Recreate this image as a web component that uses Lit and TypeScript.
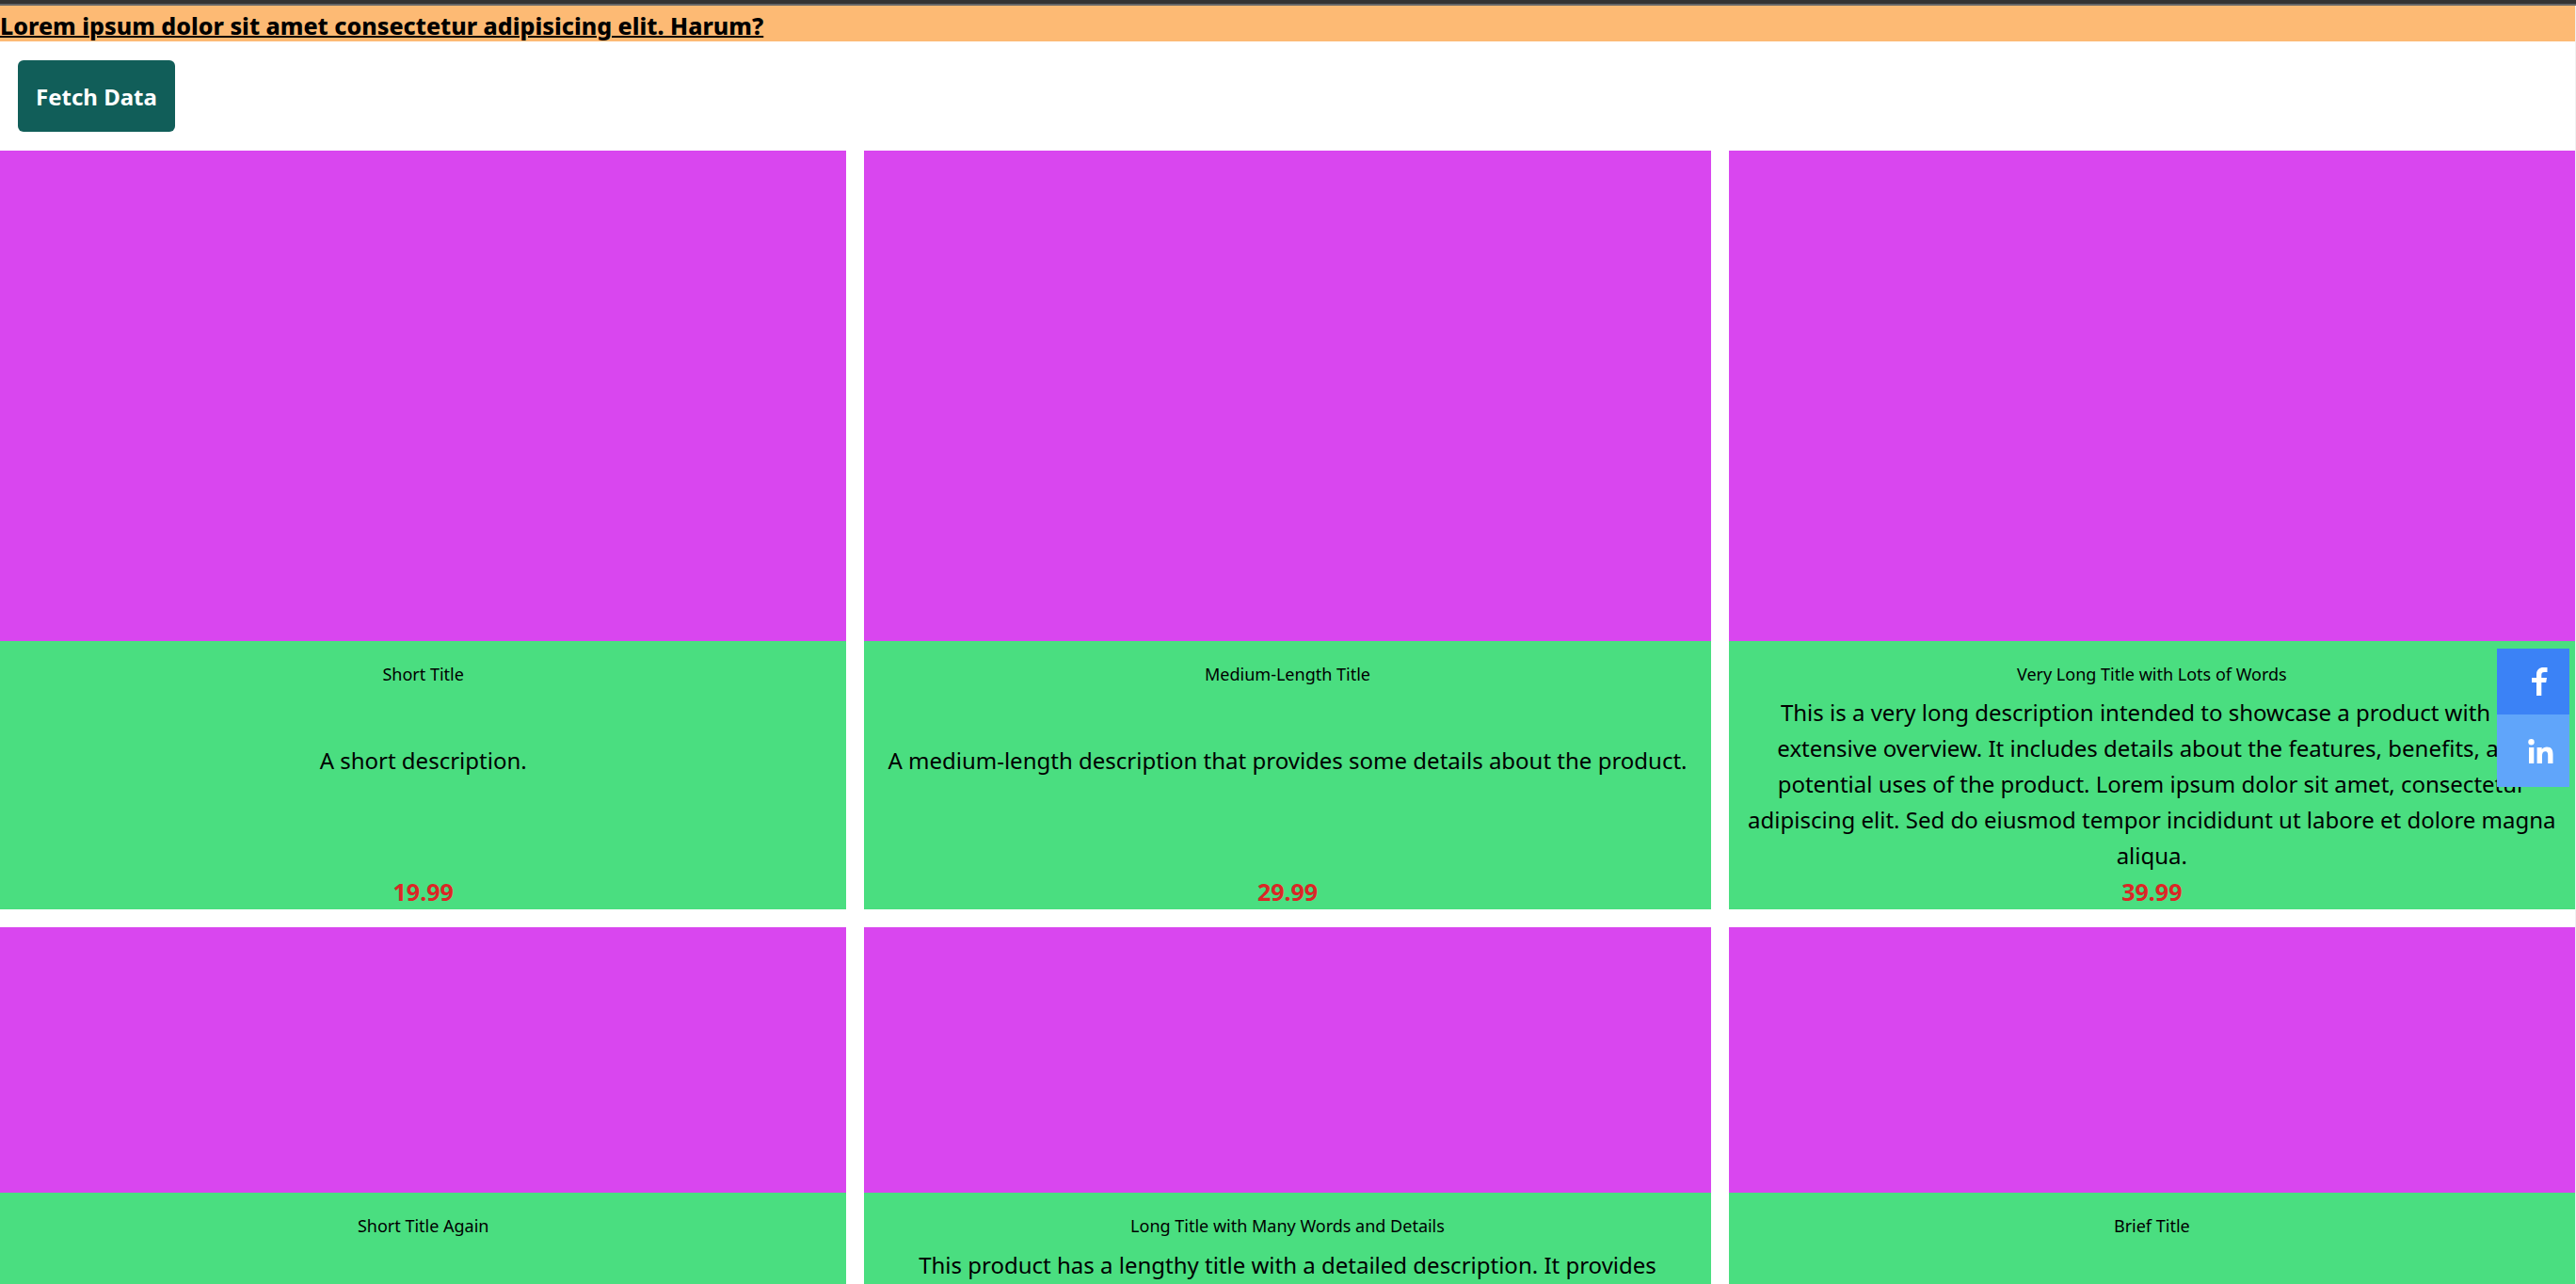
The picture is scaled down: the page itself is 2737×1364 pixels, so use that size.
import { LitElement, css, html, nothing } from "lit";
import { customElement, property } from "lit/decorators.js";
import { classMap } from "lit/directives/class-map.js";

interface Product {
  title: string;
  description?: string;
  price?: string;
  short?: boolean;
}

const products: Product[] = [
  { title: "Short Title", description: "A short description.", price: "19.99" },
  {
    title: "Medium-Length Title",
    description: "A medium-length description that provides some details about the product.",
    price: "29.99",
  },
  {
    title: "Very Long Title with Lots of Words",
    description:
      "This is a very long description intended to showcase a product with an extensive overview. It includes details about the features, benefits, and potential uses of the product. Lorem ipsum dolor sit amet, consectetur adipiscing elit. Sed do eiusmod tempor incididunt ut labore et dolore magna aliqua.",
    price: "39.99",
  },
  { title: "Short Title Again", short: true },
  {
    title: "Long Title with Many Words and Details",
    description: "This product has a lengthy title with a detailed description. It provides",
    short: true,
  },
  { title: "Brief Title", short: true },
];

@customElement("product-card")
export class ProductCard extends LitElement {
  @property({ attribute: false }) product!: Product;

  static styles = css`
    :host {
      display: flex;
      flex-direction: column;
      min-width: 0;
    }
    .media {
      flex: none;
      height: 521px;
      background: #d946ef;
    }
    .media.short {
      height: 282px;
    }
    .body {
      flex: 1;
      display: grid;
      padding: 19px 12px 0;
      background: #4ade80;
      text-align: center;
    }
    .title {
      margin: 0;
      padding-bottom: 6px;
      font-size: 18px;
      font-weight: 400;
      line-height: 32px;
    }
    .description {
      margin: 0;
      font-size: 24px;
      line-height: 38px;
    }
    .price {
      margin: 0;
      align-self: end;
      color: #dc2626;
      font-size: 25px;
      font-weight: 700;
      line-height: 38px;
    }
  `;

  render() {
    const { title, description, price, short } = this.product;
    return html`
      <div class=${classMap({ media: true, short: !!short })}></div>
      <div class="body">
        <h2 class="title">${title}</h2>
        ${description ? html`<p class="description">${description}</p>` : nothing}
        ${price ? html`<p class="price">${price}</p>` : nothing}
      </div>
    `;
  }
}

@customElement("app-root")
export class AppRoot extends LitElement {
  static styles = css`
    :host {
      display: flex;
      flex-direction: column;
      height: 100vh;
      overflow: hidden;
      background: #fff;
      color: #000;
      font-family: "Noto Sans", "Open Sans", sans-serif;
    }
    .frame {
      flex: none;
      height: 4px;
      background: #333;
      border-bottom: 2px solid #666;
    }
    .page {
      flex: 1;
      min-height: 0;
      display: flex;
      flex-direction: column;
      border-right: 1px solid #f0f0f0;
    }
    .headline {
      margin: 0;
      padding-top: 4px;
      background: #fdba74;
      font-size: 25px;
      font-weight: 800;
      line-height: 34px;
      text-decoration: underline;
      text-decoration-thickness: 2px;
    }
    .toolbar {
      padding: 20px 19px;
    }
    .fetch {
      display: block;
      padding: 20px 19px 18px;
      border: 0;
      border-radius: 6px;
      background: #115e59;
      color: #fff;
      font-family: inherit;
      font-size: 24px;
      font-weight: 700;
      line-height: 38px;
    }
    .products {
      flex: 1;
      min-height: 0;
      display: grid;
      grid-template-columns: repeat(3, minmax(0, 1fr));
      grid-template-rows: auto 1fr;
      gap: 19px;
    }
    .social {
      position: fixed;
      top: 50%;
      right: 7px;
      width: 77px;
      margin-top: 7px;
    }
    .link {
      display: flex;
      align-items: center;
      justify-content: flex-end;
      box-sizing: border-box;
      padding-right: 17px;
    }
    .facebook {
      height: 70px;
      padding-right: 23px;
      background: #3b82f6;
    }
    .linkedin {
      height: 77px;
      background: #60a5fa;
    }
    .icon {
      display: block;
      fill: #fff;
    }
  `;

  render() {
    return html`
      <div class="frame"></div>
      <div class="page">
        <h1 class="headline">Lorem ipsum dolor sit amet consectetur adipisicing elit. Harum?</h1>
        <div class="toolbar"><button class="fetch" type="button">Fetch Data</button></div>
        <main class="products">
          ${products.map((p) => html`<product-card .product=${p}></product-card>`)}
        </main>
      </div>
      <nav class="social" aria-label="Social links">
        <a class="link facebook" href="#facebook" aria-label="Facebook">
          <svg class="icon" width="17" height="30" viewBox="0 0 17 30" aria-hidden="true">
            <path d="M5 30V16H0V11H5V7.500C5 2.500 8 0 12.500 0H16.500V5H13.500C11 5 10.300 6 10.300 8V11H16L15.200 16H10.300V30Z" />
          </svg>
        </a>
        <a class="link linkedin" href="#linkedin" aria-label="LinkedIn">
          <svg class="icon" width="27" height="26" viewBox="0 0 27 26" aria-hidden="true">
            <circle cx="3.500" cy="3.200" r="3.200" />
            <path d="M1 9H6.300V26H1ZM9.600 9H14.700V11.300C15.700 9.500 17.700 8.500 20 8.500C25.300 8.500 26.500 12 26.500 16.500V26H21.200V17.700C21.200 15.700 21.100 13.200 18.500 13.200C15.800 13.200 15 15.300 15 17.600V26H9.600Z" />
          </svg>
        </a>
      </nav>
    `;
  }
}
